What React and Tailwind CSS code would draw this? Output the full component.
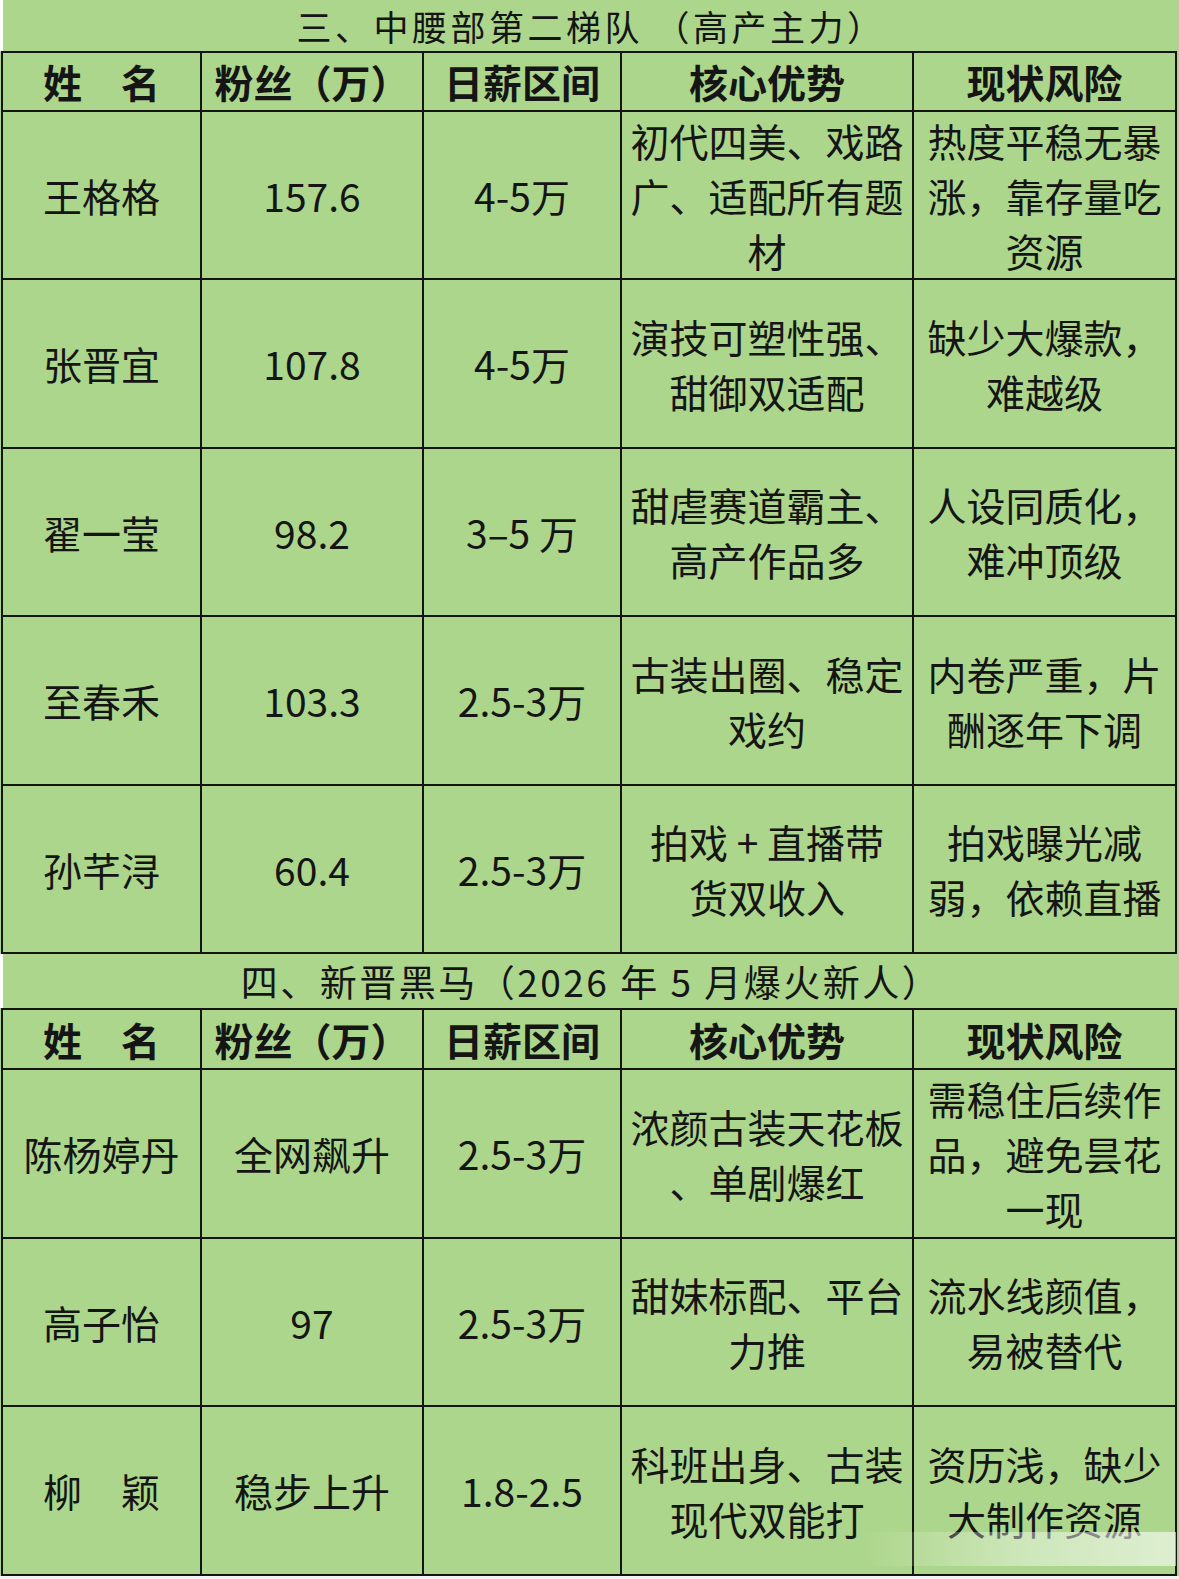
import React from 'react'

const FONT = { fontFamily: '"Noto Sans CJK SC", "Noto Sans", sans-serif' }

const HEAD = ['姓　名', '粉丝（万）', '日薪区间', '核心优势', '现状风险']

const TIER_THREE = [
  { name: ['王格格'], fans: ['157.6'], pay: ['4-5万'], edge: ['初代四美、戏路', '广、适配所有题', '材'], risk: ['热度平稳无暴', '涨，靠存量吃', '资源'] },
  { name: ['张晋宜'], fans: ['107.8'], pay: ['4-5万'], edge: ['演技可塑性强、', '甜御双适配'], risk: ['缺少大爆款，', '难越级'] },
  { name: ['翟一莹'], fans: ['98.2'], pay: ['3–5 万'], edge: ['甜虐赛道霸主、', '高产作品多'], risk: ['人设同质化，', '难冲顶级'] },
  { name: ['至春禾'], fans: ['103.3'], pay: ['2.5-3万'], edge: ['古装出圈、稳定', '戏约'], risk: ['内卷严重，片', '酬逐年下调'] },
  { name: ['孙芊浔'], fans: ['60.4'], pay: ['2.5-3万'], edge: ['拍戏 + 直播带', '货双收入'], risk: ['拍戏曝光减', '弱，依赖直播'] },
]

const TIER_FOUR = [
  { name: ['陈杨婷丹'], fans: ['全网飙升'], pay: ['2.5-3万'], edge: ['浓颜古装天花板', '、单剧爆红'], risk: ['需稳住后续作', '品，避免昙花', '一现'] },
  { name: ['高子怡'], fans: ['97'], pay: ['2.5-3万'], edge: ['甜妹标配、平台', '力推'], risk: ['流水线颜值，', '易被替代'] },
  { name: ['柳　颖'], fans: ['稳步上升'], pay: ['1.8-2.5'], edge: ['科班出身、古装', '现代双能打'], risk: ['资历浅，缺少', '大制作资源'] },
]

function Cell({ lines, bold }) {
  return (
    <div className={`flex flex-col items-center justify-center bg-[#acd68b] text-center text-[39px] leading-[55px] text-[#151515] whitespace-pre ${bold ? 'font-bold' : 'font-normal'}`}>
      {lines.map((l, i) => <span key={i}>{l}</span>)}
    </div>
  )
}

function Title({ children, className }) {
  return (
    <div className={`flex items-center justify-center border-l-[3px] border-white bg-[#acd68b] text-[#151515] whitespace-pre ${className}`}>
      {children}
    </div>
  )
}

function Grid({ rows, rowsClass }) {
  return (
    <div className={`ml-[1px] grid w-[1176px] grid-cols-[197px_220px_196px_290px_261px] gap-[2px] bg-[#141414] p-[2px] ${rowsClass}`}>
      {HEAD.map((h) => <Cell key={h} lines={[h]} bold />)}
      {rows.map((r, i) => (
        <React.Fragment key={i}>
          <Cell lines={r.name} />
          <Cell lines={r.fans} />
          <Cell lines={r.pay} />
          <Cell lines={r.edge} />
          <Cell lines={r.risk} />
        </React.Fragment>
      ))}
    </div>
  )
}

export default function App() {
  return (
    <div className="relative h-[1579px] w-[1179px] overflow-hidden bg-[#acd68b]" style={FONT}>
      <Title className="h-[51px] text-[35px] leading-[51px] tracking-[3.5px]">三、中腰部第二梯队 （高产主力）</Title>
      <Grid rows={TIER_THREE} rowsClass="grid-rows-[57px_166px_167px_166px_167px_166px]" />
      <Title className="h-[54px] text-[37px] leading-[54px] tracking-[2.5px]">四、新晋黑马（2026 年 5 月爆火新人）</Title>
      <Grid rows={TIER_FOUR} rowsClass="grid-rows-[58px_167px_166px_167px]" />
      <div className="h-[3px] bg-[#f2f4ef]" />

      {/* faded watermark band, bottom right */}
      <div className="absolute left-[860px] top-[1532px] h-[34px] w-[316px] bg-gradient-to-r from-transparent via-white/40 to-white/60" />
    </div>
  )
}
